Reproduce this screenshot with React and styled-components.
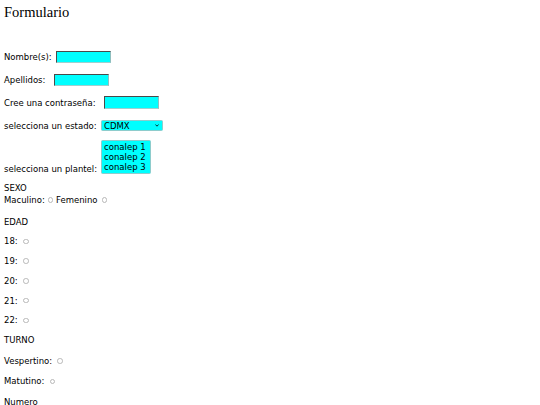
import React from "react";
import styled, { createGlobalStyle } from "styled-components";

const Global = createGlobalStyle`
  html, body { margin: 0; padding: 0; background: #fff; }
  body {
    font-family: "DejaVu Sans", Verdana, sans-serif;
    font-size: 8.5px;
    color: #000;
  }
`;

const Page = styled.div`
  padding: 5px 0 0 4px;
  width: 540px;
  height: 405px;
  box-sizing: border-box;
  overflow: hidden;
`;

const Title = styled.h2`
  margin: 0;
  font-family: "Liberation Serif", "Times New Roman", serif;
  font-weight: normal;
  font-size: 14.5px;
  line-height: 14.5px;
`;

const Form = styled.form`
  display: flex;
  flex-direction: column;
  margin-top: 31px;
`;

const Field = styled.div`
  display: flex;
  align-items: ${(p) => (p.$bottom ? "flex-end" : "center")};
  gap: ${(p) => p.$gap}px;
  min-height: 13px;
  margin-bottom: ${(p) => p.$after}px;
  line-height: 10px;
  white-space: pre;
`;

const TextInput = styled.input`
  box-sizing: border-box;
  width: 55px;
  height: 12.5px;
  margin: 0;
  padding: 0;
  background: #00ffff;
  border-style: solid;
  border-width: 1px;
  border-color: #4a4a4a #8fbfbf #9fcfcf #4a4a4a;
  font: inherit;
`;

const SelectWrap = styled.div`
  position: relative;
  display: inline-flex;
`;

const Select = styled.select`
  appearance: none;
  box-sizing: border-box;
  width: 62px;
  height: 10.5px;
  margin: 0;
  padding: 0 0 0 2px;
  background: #00ffff;
  border: 1px solid #8ecccc;
  border-radius: 1.5px;
  font: inherit;
  font-size: 8.5px;
  line-height: 8px;
  color: #000;
  outline: none;
`;

const Chevron = styled.svg`
  position: absolute;
  right: 4px;
  top: 3.5px;
  width: 4px;
  height: 3px;
  pointer-events: none;
`;

const ListBox = styled.div`
  box-sizing: border-box;
  width: 50px;
  padding: 1px 2px;
  background: #00ffff;
  border: 1px solid #8ecccc;
  border-radius: 1.5px;
`;

const Option = styled.div`
  height: 10px;
  line-height: 10px;
`;

const Block = styled.div`
  display: flex;
  flex-direction: column;
  line-height: 12px;
  margin-bottom: ${(p) => p.$after}px;
`;

const Line = styled.div`
  display: flex;
  align-items: center;
  height: 12px;
  white-space: pre;
  margin-bottom: ${(p) => p.$after || 0}px;
`;

const Radio = styled.input.attrs({ type: "radio" })`
  appearance: none;
  box-sizing: border-box;
  width: 5.5px;
  height: 5.5px;
  margin: 0 ${(p) => p.$trail ?? 1.5}px 0 ${(p) => p.$lead}px;
  border: 0.8px solid #b8b8b8;
  border-radius: 50%;
  background: #fff;
`;

const ages = ["18", "19", "20", "21", "22"];

export default function App() {
  return (
    <>
      <Global />
      <Page>
        <Title>Formulario</Title>
        <Form>
          <Field $gap={4} $after={10}>
            <span>Nombre(s):</span>
            <TextInput type="text" />
          </Field>
          <Field $gap={8.6} $after={9.5}>
            <span>Apellidos:</span>
            <TextInput type="text" />
          </Field>
          <Field $gap={8} $after={10}>
            <span>Cree una contraseña:</span>
            <TextInput type="password" />
          </Field>
          <Field $gap={4.4} $after={8}>
            <span>selecciona un estado:</span>
            <SelectWrap>
              <Select defaultValue="CDMX">
                <option>CDMX</option>
              </Select>
              <Chevron viewBox="0 0 4 3">
                <path d="M0.4 0.5 L2 2.2 L3.6 0.5" fill="none" stroke="#000" strokeWidth="0.8" />
              </Chevron>
            </SelectWrap>
          </Field>
          <Field $gap={4} $after={8} $bottom>
            <span>selecciona un plantel:</span>
            <ListBox role="listbox">
              <Option>conalep 1</Option>
              <Option>conalep 2</Option>
              <Option>conalep 3</Option>
            </ListBox>
          </Field>
          <Block $after={10}>
            <Line>SEXO</Line>
            <Line>
              Maculino: <Radio name="sexo" $lead={0.3} $trail={0} /> Femenino <Radio name="sexo" $lead={1.5} />
            </Line>
          </Block>
          <Line $after={7.3}>EDAD</Line>
          {ages.map((a) => (
            <Line key={a} $after={7.8}>
              {a}: <Radio name="edad" $lead={2.6} />
            </Line>
          ))}
          <Line $after={8.6}>TURNO</Line>
          <Line $after={8.6}>
            Vespertino: <Radio name="turno" $lead={2.6} />
          </Line>
          <Line $after={8.4}>
            Matutino: <Radio name="turno" $lead={2.6} />
          </Line>
          <Line>Numero</Line>
        </Form>
      </Page>
    </>
  );
}
